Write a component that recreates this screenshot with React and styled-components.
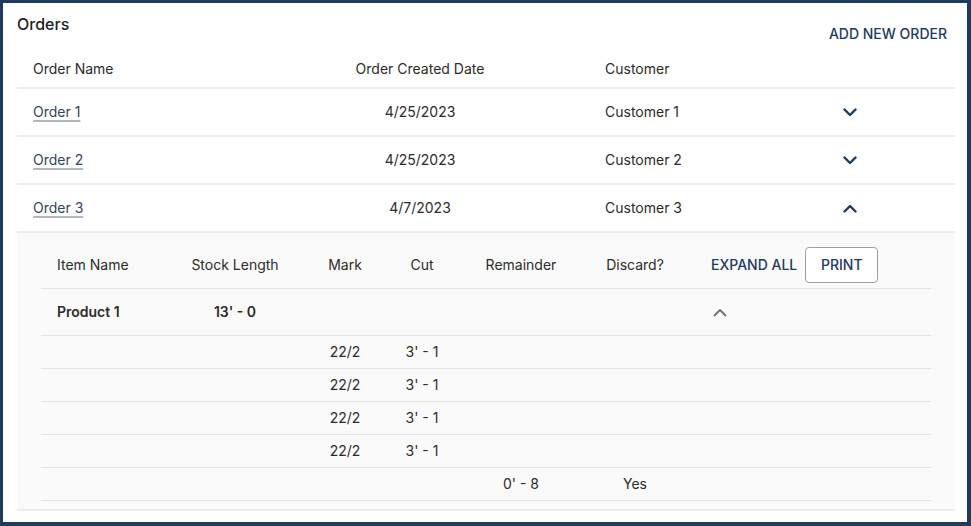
import React from "react";
import styled, { createGlobalStyle } from "styled-components";

const Global = createGlobalStyle`
  html, body { margin: 0; padding: 0; }
  body {
    font-family: Inter, "Noto Sans", "Liberation Sans", sans-serif;
    background: #1e3a5f;
    color: #2b2b2b;
  }
`;

const Page = styled.div`
  width: 971px;
  height: 526px;
  box-sizing: border-box;
  padding: 3px 4px 4px 3px;
  background: #1e3a5f;
`;

const Card = styled.div`
  background: #fff;
  height: 100%;
  box-sizing: border-box;
  padding: 0 12px 0 14px;
  overflow: hidden;
`;

const Header = styled.div`
  display: flex;
  justify-content: space-between;
  align-items: flex-start;
`;

const Title = styled.h1`
  margin: 0;
  padding-top: 9px;
  font-size: 16px;
  line-height: 24px;
  font-weight: 500;
  color: #222;
`;

const TextButton = styled.button`
  border: none;
  background: none;
  font-family: inherit;
  font-size: 14px;
  font-weight: 500;
  color: #1e3a5f;
  height: 36px;
  padding: 0 8px;
  margin-top: ${(p) => p.$mt || 0}px;
  cursor: pointer;
`;

const OutlineButton = styled.button`
  border: 1px solid #a0a0a0;
  border-radius: 4px;
  background: #fff;
  font-family: inherit;
  font-size: 14px;
  font-weight: 500;
  color: #1e3a5f;
  height: 36px;
  width: 73px;
  padding: 0;
  cursor: pointer;
`;

const OuterRow = styled.div`
  display: grid;
  grid-template-columns: 233px 340px 155px 210px;
  align-items: center;
  border-bottom: 2px solid #ececec;
  height: ${(p) => p.$h}px;
  box-sizing: border-box;
  font-size: 14px;
  line-height: 20px;
  color: #2b2b2b;
`;

const HeadRow = styled(OuterRow)`
  align-items: end;
  padding-bottom: 8px;
`;

const Cell = styled.div`
  padding-left: ${(p) => p.$pl || 0}px;
  text-align: ${(p) => p.$align || "left"};
  display: ${(p) => (p.$flex ? "flex" : "block")};
  justify-content: center;
`;

const OrderLink = styled.a`
  color: #34435c;
  text-decoration: underline;
  text-decoration-color: #b3b8c2;
  text-decoration-thickness: 1.5px;
  text-underline-offset: 3px;
  cursor: pointer;
`;

const Expanded = styled.div`
  background: #fafafa;
  padding: 8px 24px 8px 24px;
  border-bottom: 2px solid #ececec;
`;

const InnerRow = styled.div`
  display: grid;
  grid-template-columns: 134px 120px 100px 54px 144px 84px 1fr;
  align-items: center;
  height: ${(p) => p.$h}px;
  box-sizing: border-box;
  border-bottom: 1px solid #e2e2e2;
  font-size: 14px;
  line-height: 20px;
  color: #2b2b2b;
  font-weight: ${(p) => (p.$bold ? 600 : 400)};
`;

const InnerCell = styled.div`
  text-align: ${(p) => p.$align || "center"};
  padding-left: ${(p) => p.$pl || 0}px;
`;

const Actions = styled.div`
  display: flex;
  align-items: center;
  gap: 0;
  padding-left: 26px;
`;

const IconWrap = styled.span`
  display: inline-flex;
  width: 24px;
  height: 24px;
  align-items: center;
  justify-content: center;
  margin-left: ${(p) => p.$ml || 0}px;
`;

const Chevron = ({ up, color = "#1e3a5f", sw = 2.4 }) => (
  <svg width="14" height="9" viewBox="0 0 14 9" fill="none">
    <path
      d={up ? "M1.5 7.5 L7 2 L12.5 7.5" : "M1.5 1.5 L7 7 L12.5 1.5"}
      stroke={color}
      strokeWidth={sw}
      strokeLinecap="round"
      strokeLinejoin="round"
    />
  </svg>
);

const orders = [
  { name: "Order 1", date: "4/25/2023", customer: "Customer 1", open: false },
  { name: "Order 2", date: "4/25/2023", customer: "Customer 2", open: false },
  { name: "Order 3", date: "4/7/2023", customer: "Customer 3", open: true },
];

const cuts = [
  { mark: "22/2", cut: "3' - 1" },
  { mark: "22/2", cut: "3' - 1" },
  { mark: "22/2", cut: "3' - 1" },
  { mark: "22/2", cut: "3' - 1" },
];

export default function App() {
  return (
    <>
      <Global />
      <Page>
        <Card>
          <Header>
            <Title>Orders</Title>
            <TextButton $mt={12}>ADD NEW ORDER</TextButton>
          </Header>
          <HeadRow $h={38}>
            <Cell $pl={16}>Order Name</Cell>
            <Cell $align="center">Order Created Date</Cell>
            <Cell $pl={15}>Customer</Cell>
            <Cell />
          </HeadRow>
          {orders.map((o) => (
            <React.Fragment key={o.name}>
              <OuterRow $h={48}>
                <Cell $pl={16}>
                  <OrderLink>{o.name}</OrderLink>
                </Cell>
                <Cell $align="center">{o.date}</Cell>
                <Cell $pl={15}>{o.customer}</Cell>
                <Cell $flex>
                  <IconWrap>
                    <Chevron up={o.open} />
                  </IconWrap>
                </Cell>
              </OuterRow>
              {o.open && (
                <Expanded>
                  <InnerRow $h={48}>
                    <InnerCell $align="left" $pl={16}>Item Name</InnerCell>
                    <InnerCell>Stock Length</InnerCell>
                    <InnerCell>Mark</InnerCell>
                    <InnerCell>Cut</InnerCell>
                    <InnerCell>Remainder</InnerCell>
                    <InnerCell>Discard?</InnerCell>
                    <Actions>
                      <TextButton>EXPAND ALL</TextButton>
                      <OutlineButton>PRINT</OutlineButton>
                    </Actions>
                  </InnerRow>
                  <InnerRow $h={47} $bold>
                    <InnerCell $align="left" $pl={16}>Product 1</InnerCell>
                    <InnerCell>13' - 0</InnerCell>
                    <InnerCell />
                    <InnerCell />
                    <InnerCell />
                    <InnerCell />
                    <Actions>
                      <IconWrap $ml={5}>
                        <Chevron up color="#707070" sw={1.8} />
                      </IconWrap>
                    </Actions>
                  </InnerRow>
                  {cuts.map((c, i) => (
                    <InnerRow $h={33} key={i}>
                      <InnerCell />
                      <InnerCell />
                      <InnerCell>{c.mark}</InnerCell>
                      <InnerCell>{c.cut}</InnerCell>
                      <InnerCell />
                      <InnerCell />
                      <InnerCell />
                    </InnerRow>
                  ))}
                  <InnerRow $h={33}>
                    <InnerCell />
                    <InnerCell />
                    <InnerCell />
                    <InnerCell />
                    <InnerCell>0' - 8</InnerCell>
                    <InnerCell>Yes</InnerCell>
                    <InnerCell />
                  </InnerRow>
                </Expanded>
              )}
            </React.Fragment>
          ))}
        </Card>
      </Page>
    </>
  );
}
